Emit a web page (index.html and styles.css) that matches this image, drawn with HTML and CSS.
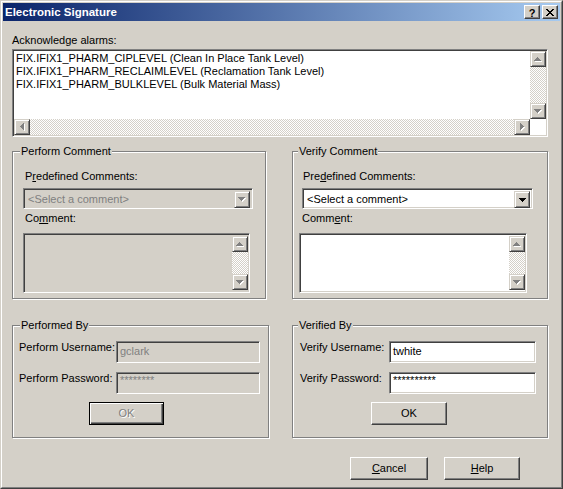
FILE: index.html
```html
<!DOCTYPE html>
<html>
<head>
<meta charset="utf-8">
<link rel="stylesheet" href="styles.css">
</head>
<body>
<div class="window">
 <div class="window-inner">
  <div class="titlebar">
   <span class="title">Electronic Signature</span>
   <div class="caption-btns">
    <span class="cbtn help">?</span>
    <span class="cbtn close"><svg width="8" height="7" viewBox="0 0 8 7"><path d="M0 0h2v1H0zM6 0h2v1H6zM1 1h2v1H1zM5 1h2v1H5zM2 2h4v1H2zM3 3h2v1H3zM2 4h4v1H2zM1 5h2v1H1zM5 5h2v1H5zM0 6h2v1H0zM6 6h2v1H6z" fill="#000"/></svg></span>
   </div>
  </div>
  <div class="content">
   <div class="ack-label">Acknowledge alarms:</div>
   <div class="listbox">
    <div class="list-items">
     <div class="item">FIX.IFIX1_PHARM_CIPLEVEL (Clean In Place Tank Level)</div>
     <div class="item">FIX.IFIX1_PHARM_RECLAIMLEVEL (Reclamation Tank Level)</div>
     <div class="item">FIX.IFIX1_PHARM_BULKLEVEL (Bulk Material Mass)</div>
    </div>
    <div class="vscroll">
     <div class="sbtn"><svg width="8" height="5" viewBox="0 0 8 5"><path class="hl" transform="translate(1 1)" d="M3 0h1v1H3zM2 1h3v1H2zM1 2h5v1H1zM0 3h7v1H0z"/><path class="dis" d="M3 0h1v1H3zM2 1h3v1H2zM1 2h5v1H1zM0 3h7v1H0z"/></svg></div>
     <div class="track"></div>
     <div class="sbtn"><svg width="8" height="5" viewBox="0 0 8 5"><path class="hl" transform="translate(1 1)" d="M0 0h7v1H0zM1 1h5v1H1zM2 2h3v1H2zM3 3h1v1H3z"/><path class="dis" d="M0 0h7v1H0zM1 1h5v1H1zM2 2h3v1H2zM3 3h1v1H3z"/></svg></div>
    </div>
    <div class="hscroll">
     <div class="sbtn"><svg width="5" height="8" viewBox="0 0 5 8"><path class="hl" transform="translate(1 1)" d="M3 0h1v7H3zM2 1h1v5H2zM1 2h1v3H1zM0 3h1v1H0z"/><path class="dis" d="M3 0h1v7H3zM2 1h1v5H2zM1 2h1v3H1zM0 3h1v1H0z"/></svg></div>
     <div class="track"></div>
     <div class="sbtn"><svg width="5" height="8" viewBox="0 0 5 8"><path class="hl" transform="translate(1 1)" d="M0 0h1v7H0zM1 1h1v5H1zM2 2h1v3H2zM3 3h1v1H3z"/><path class="dis" d="M0 0h1v7H0zM1 1h1v5H1zM2 2h1v3H2zM3 3h1v1H3z"/></svg></div>
    </div>
   </div>

   <div class="group-row comments">
    <fieldset class="group perform-comment">
     <legend>Perform Comment</legend>
     <div class="field-label pc-label1">P<u>r</u>edefined Comments:</div>
     <div class="combo disabled pc-combo">
      <div class="combo-text">&lt;Select a comment&gt;</div>
      <div class="sbtn combo-btn"><svg width="8" height="5" viewBox="0 0 8 5"><path class="hl" transform="translate(1 1)" d="M0 0h7v1H0zM1 1h5v1H1zM2 2h3v1H2zM3 3h1v1H3z"/><path class="dis" d="M0 0h7v1H0zM1 1h5v1H1zM2 2h3v1H2zM3 3h1v1H3z"/></svg></div>
     </div>
     <div class="field-label pc-label2">Co<u>m</u>ment:</div>
     <div class="memo disabled pc-memo">
      <div class="memo-text"></div>
      <div class="vscroll">
       <div class="sbtn"><svg width="8" height="5" viewBox="0 0 8 5"><path class="hl" transform="translate(1 1)" d="M3 0h1v1H3zM2 1h3v1H2zM1 2h5v1H1zM0 3h7v1H0z"/><path class="dis" d="M3 0h1v1H3zM2 1h3v1H2zM1 2h5v1H1zM0 3h7v1H0z"/></svg></div>
       <div class="track"></div>
       <div class="sbtn"><svg width="8" height="5" viewBox="0 0 8 5"><path class="hl" transform="translate(1 1)" d="M0 0h7v1H0zM1 1h5v1H1zM2 2h3v1H2zM3 3h1v1H3z"/><path class="dis" d="M0 0h7v1H0zM1 1h5v1H1zM2 2h3v1H2zM3 3h1v1H3z"/></svg></div>
      </div>
     </div>
    </fieldset>

    <fieldset class="group verify-comment">
     <legend>Verify Comment</legend>
     <div class="field-label vc-label1">Pre<u>d</u>efined Comments:</div>
     <div class="combo vc-combo">
      <div class="combo-text">&lt;Select a comment&gt;</div>
      <div class="sbtn combo-btn"><svg width="7" height="4" viewBox="0 0 7 4"><path fill="#000" d="M0 0h7v1H0zM1 1h5v1H1zM2 2h3v1H2zM3 3h1v1H3z"/></svg></div>
     </div>
     <div class="field-label vc-label2">Comm<u>e</u>nt:</div>
     <div class="memo vc-memo">
      <div class="memo-text"></div>
      <div class="vscroll">
       <div class="sbtn"><svg width="8" height="5" viewBox="0 0 8 5"><path class="hl" transform="translate(1 1)" d="M3 0h1v1H3zM2 1h3v1H2zM1 2h5v1H1zM0 3h7v1H0z"/><path class="dis" d="M3 0h1v1H3zM2 1h3v1H2zM1 2h5v1H1zM0 3h7v1H0z"/></svg></div>
       <div class="track"></div>
       <div class="sbtn"><svg width="8" height="5" viewBox="0 0 8 5"><path class="hl" transform="translate(1 1)" d="M0 0h7v1H0zM1 1h5v1H1zM2 2h3v1H2zM3 3h1v1H3z"/><path class="dis" d="M0 0h7v1H0zM1 1h5v1H1zM2 2h3v1H2zM3 3h1v1H3z"/></svg></div>
      </div>
     </div>
    </fieldset>
   </div>

   <div class="group-row users">
    <fieldset class="group performed-by">
     <legend>Performed By</legend>
     <div class="field-row first">
      <div class="row-label">Perform Username:</div>
      <div class="edit disabled">gclark</div>
     </div>
     <div class="field-row">
      <div class="row-label">Perform Password:</div>
      <div class="edit disabled pw">********</div>
     </div>
     <div class="btn default disabled ok">OK</div>
    </fieldset>

    <fieldset class="group verified-by">
     <legend>Verified By</legend>
     <div class="field-row first">
      <div class="row-label">Verify Username:</div>
      <div class="edit">twhite</div>
     </div>
     <div class="field-row">
      <div class="row-label">Verify Password:</div>
      <div class="edit pw">**********</div>
     </div>
     <div class="btn ok">OK</div>
    </fieldset>
   </div>

   <div class="footer">
    <div class="btn cancel"><u>C</u>ancel</div>
    <div class="btn helpbtn"><u>H</u>elp</div>
   </div>
  </div>
 </div>
</div>
</body>
</html>
```

FILE: styles.css
```css
* { box-sizing: border-box; }

html, body {
  margin: 0;
  padding: 0;
  background: #d4d0c8;
}

body {
  font-family: "Liberation Sans", Arial, sans-serif;
  font-size: 11px;
  line-height: 13px;
  color: #000;
}

u { text-decoration: underline; text-underline-offset: 1px; }

.window {
  width: 563px;
  height: 489px;
  border: 1px solid;
  border-color: #d4d0c8 #404040 #404040 #d4d0c8;
  background: #d4d0c8;
  display: flex;
}

.window-inner {
  flex: 1;
  border: 1px solid;
  border-color: #ffffff #808080 #808080 #ffffff;
  padding: 1px;
  display: flex;
  flex-direction: column;
}

/* title bar */
.titlebar {
  height: 18px;
  background: linear-gradient(to right, #0a246a, #a6caf0);
  display: flex;
  align-items: center;
  justify-content: space-between;
  padding: 0 2px 0 2px;
}

.title {
  color: #fff;
  font-weight: bold;
  font-size: 11.5px;
  line-height: 18px;
}

.caption-btns {
  display: flex;
  gap: 2px;
}

.cbtn {
  width: 16px;
  height: 14px;
  background: #d4d0c8;
  border: 1px solid;
  border-color: #ffffff #404040 #404040 #ffffff;
  box-shadow: inset -1px -1px #808080;
  display: flex;
  align-items: center;
  justify-content: center;
}

.cbtn.help {
  font-weight: bold;
  font-size: 11px;
  line-height: 12px;
  padding-top: 1px;
}

/* content */
.content {
  flex: 1;
  padding: 13px 0 0 9px;
  display: flex;
  flex-direction: column;
}

.ack-label { height: 13px; }

/* sunken field */
.listbox, .edit, .combo, .memo {
  border: 1px solid;
  border-color: #808080 #ffffff #ffffff #808080;
  box-shadow: inset 1px 1px #404040, inset -1px -1px #d4d0c8;
  background: #fff;
}

.listbox {
  margin-top: 2px;
  width: 536px;
  height: 88px;
  padding: 1px;
  display: grid;
  grid-template-columns: 1fr 16px;
  grid-template-rows: 1fr 16px;
}

.list-items {
  padding: 1px 0 0 2px;
  white-space: nowrap;
  overflow: hidden;
}

.item { height: 13px; }

.vscroll {
  display: flex;
  flex-direction: column;
  width: 16px;
}

.listbox .vscroll { grid-column: 2; grid-row: 1; }

.hscroll {
  grid-column: 1;
  grid-row: 2;
  display: flex;
}

.track {
  flex: 1;
  background: repeating-conic-gradient(#d4d0c8 0 25%, #ffffff 0 50%) 0 0 / 2px 2px;
}

.sbtn {
  width: 16px;
  height: 16px;
  flex: none;
  background: #d4d0c8;
  border: 1px solid;
  border-color: #d4d0c8 #404040 #404040 #d4d0c8;
  box-shadow: inset 1px 1px #ffffff, inset -1px -1px #808080;
  display: flex;
  align-items: center;
  justify-content: center;
}

.sbtn svg { display: block; }
.hl { fill: #ffffff; }
.dis { fill: #808080; }

/* group boxes */
.group-row {
  display: flex;
}

.group {
  margin: 0;
  padding: 0;
  min-inline-size: 0;
  border: 1px solid #808080;
  box-shadow: inset 1px 1px #ffffff, 1px 1px #ffffff;
}

.group legend {
  margin-left: 7px;
  padding: 0 1px;
  line-height: 13px;
  background: #d4d0c8;
}

.verify-comment legend, .verified-by legend { margin-left: 5px; }

.comments { margin-top: 8px; }

.perform-comment { width: 254px; height: 154px; }
.verify-comment { width: 256px; height: 154px; margin-left: 26px; }

.field-label { height: 13px; }
.pc-label1 { margin: 12px 0 0 12px; }
.vc-label1 { margin: 12px 0 0 10px; }
.pc-label2 { margin: 3px 0 0 12px; }
.vc-label2 { margin: 3px 0 0 9px; }

.combo {
  height: 21px;
  margin-top: 5px;
  padding: 2px;
  display: flex;
}

.pc-combo { width: 230px; margin-left: 10px; }
.vc-combo { width: 231px; margin-left: 9px; }

.combo-text {
  flex: 1;
  padding-left: 2px;
  line-height: 17px;
}

.combo-btn { height: 17px; }

.memo {
  height: 60px;
  margin-top: 8px;
  padding: 2px 1px 2px 2px;
  display: flex;
}

.memo-text { flex: 1; }

.pc-memo { width: 227px; margin-left: 10px; }
.vc-memo { width: 228px; margin-left: 6px; }

.disabled { background: #d4d0c8; color: #808080; }

/* users */
.users { margin-top: 20px; }

.performed-by { width: 257px; height: 119px; }
.verified-by { width: 256px; height: 119px; margin-left: 23px; }

.field-row {
  display: flex;
  margin-top: 9px;
}

.row-label { line-height: 13px; }

.performed-by .row-label { width: 97px; margin-left: 6px; }
.verified-by .row-label { width: 89px; margin-left: 7px; }

.edit {
  height: 22px;
  padding: 3px 3px 0 3px;
  line-height: 13px;
}

.performed-by .edit { width: 144px; }
.verified-by .edit { width: 147px; }

.edit.pw { padding-top: 1px; }

.btn {
  height: 23px;
  background: #d4d0c8;
  border: 1px solid;
  border-color: #ffffff #404040 #404040 #ffffff;
  box-shadow: inset -1px -1px #808080;
  display: flex;
  align-items: center;
  justify-content: center;
}

.btn.default {
  border-color: #000;
  box-shadow: inset 1px 1px #ffffff, inset -1px -1px #404040, inset -2px -2px #808080;
}

.btn.disabled { color: #808080; text-shadow: 1px 1px #ffffff; }

.ok { margin-top: 8px; }
.performed-by .ok { width: 75px; margin-left: 76px; }
.verified-by .ok { width: 76px; margin-left: 78px; }

/* footer */
.footer {
  display: flex;
  margin-top: 19px;
  padding-left: 338px;
}

.cancel { width: 78px; }
.helpbtn { width: 76px; margin-left: 16px; }
```
